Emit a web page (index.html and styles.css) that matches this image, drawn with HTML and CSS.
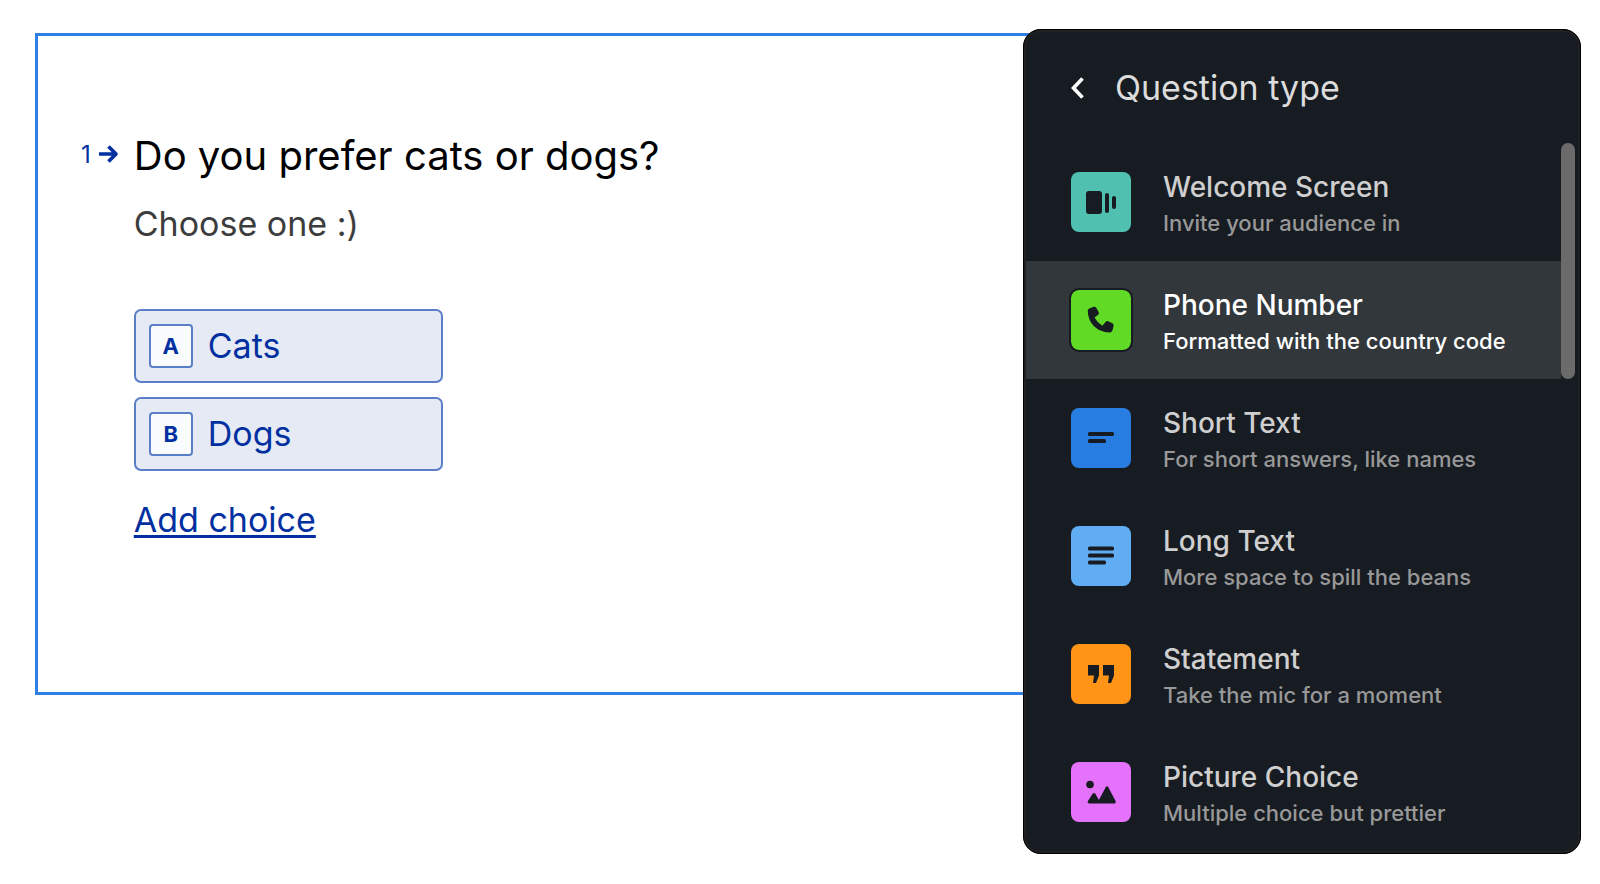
FILE: index.html
```
<!DOCTYPE html>
<html lang="en">
<head>
  <meta charset="UTF-8">
  <meta name="viewport" content="width=device-width,initial-scale=1.0">
  <title>Form Builder | Question type</title>
  <link rel="stylesheet" href="styles.css">
</head>
<body>

  <main class="builder">
    <section class="question-card">
      <div class="question-number">
        <span>1</span>
        <svg width="20" height="18" viewBox="0 0 20 18" fill="none" stroke="currentColor" stroke-width="3.6">
          <path d="M0 9h17M9.500 1.500L17 9l-7.500 7.500" stroke-linejoin="round"/>
        </svg>
      </div>
      <div class="question-body">
        <h1>Do you prefer cats or dogs?</h1>
        <p class="description">Choose one :)</p>

        <div class="choices">
          <button type="button" class="choice"><span class="key">A</span>Cats</button>
          <button type="button" class="choice"><span class="key">B</span>Dogs</button>
        </div>

        <a href="#" class="add-choice">Add choice</a>
      </div>
    </section>

    <aside class="type-panel">
      <header class="panel-header">
        <button type="button" class="back" aria-label="Back">
          <svg width="14" height="22" viewBox="0 0 14 22" fill="none" stroke="currentColor" stroke-width="3.6">
            <path d="M11.500 1.500L2.500 11l9 9.500"/>
          </svg>
        </button>
        <h2>Question type</h2>
      </header>

      <ul class="type-list">
        <li>
          <button type="button" class="type">
            <span class="icon welcome">
              <svg viewBox="0 0 60 60" fill="currentColor">
                <rect x="15" y="19" width="16" height="23" rx="3"/>
                <rect x="34" y="21" width="4" height="20" rx="2"/>
                <rect x="41" y="24" width="4" height="13" rx="2"/>
              </svg>
            </span>
            <span class="text">
              <span class="name">Welcome Screen</span>
              <span class="hint">Invite your audience in</span>
            </span>
          </button>
        </li>
        <li>
          <button type="button" class="type active">
            <span class="icon phone">
              <svg viewBox="0 0 60 60" fill="currentColor">
                <path d="M18.300 18.500l4.400-1.700q1.900-.4 2.700 1.200l2.400 4.200q.6 1.500-.6 2.500l-3.700 2.900q2.600 5 7.800 8.200l3.200-3.900q1.100-1.200 2.600-.6l4.300 2q1.500.9 1.200 2.600l-1.200 4.500q-.6 1.900-2.800 2C25.500 42.300 16.800 32.500 16.800 20.500q.1-1.400 1.500-2z"/>
              </svg>
            </span>
            <span class="text">
              <span class="name">Phone Number</span>
              <span class="hint">Formatted with the country code</span>
            </span>
          </button>
        </li>
        <li>
          <button type="button" class="type">
            <span class="icon short">
              <svg viewBox="0 0 60 60" fill="currentColor">
                <rect x="17" y="24" width="26" height="4" rx="1.500"/>
                <rect x="17" y="31" width="18" height="4" rx="1.500"/>
              </svg>
            </span>
            <span class="text">
              <span class="name">Short Text</span>
              <span class="hint">For short answers, like names</span>
            </span>
          </button>
        </li>
        <li>
          <button type="button" class="type">
            <span class="icon long">
              <svg viewBox="0 0 60 60" fill="currentColor">
                <rect x="17" y="20.500" width="26" height="4" rx="1.500"/>
                <rect x="17" y="27.500" width="26" height="4" rx="1.500"/>
                <rect x="17" y="34.500" width="18" height="4" rx="1.500"/>
              </svg>
            </span>
            <span class="text">
              <span class="name">Long Text</span>
              <span class="hint">More space to spill the beans</span>
            </span>
          </button>
        </li>
        <li>
          <button type="button" class="type">
            <span class="icon statement">
              <svg viewBox="0 0 60 60" fill="currentColor">
                <path d="M17 21h11v10.500l-3 7.500h-3l1-7.500h-6zM32 21h11v10.500l-3 7.500h-3l1-7.500h-6z"/>
              </svg>
            </span>
            <span class="text">
              <span class="name">Statement</span>
              <span class="hint">Take the mic for a moment</span>
            </span>
          </button>
        </li>
        <li>
          <button type="button" class="type">
            <span class="icon picture">
              <svg viewBox="0 0 60 60" fill="currentColor">
                <circle cx="19" cy="22.500" r="3.800"/>
                <path d="M18 41.500q-2-.3-1.200-2.200l5-7.800q1.200-1.200 2.400 0l3.700 6.500 6.900-13q1.200-1.600 2.400 0l7.500 14.300q.6 1.800-1.200 2.200z"/>
              </svg>
            </span>
            <span class="text">
              <span class="name">Picture Choice</span>
              <span class="hint">Multiple choice but prettier</span>
            </span>
          </button>
        </li>
      </ul>
      <div class="scroll-thumb"></div>
    </aside>
  </main>

</body>
</html>
```

FILE: styles.css
```
* {
  box-sizing: border-box;
}
body {
  margin: 0;
  background: #fff;
  font-family: Inter, "Liberation Sans", sans-serif;
}
h1, h2, p, ul {
  margin: 0;
  padding: 0;
  font-weight: 400;
}
button {
  font-family: inherit;
  cursor: pointer;
}
svg {
  display: block;
}
.builder {
  position: relative;
  min-height: 100vh;
  padding: 33px 26px 32px 35px;
}

/* Question preview */
.question-card {
  display: flex;
  gap: 15px;
  padding: 96px 43px 150px;
  border: 3px solid #2f80e4;
}
.question-number {
  display: flex;
  align-items: center;
  gap: 8px;
  height: 44px;
  color: #0230a0;
  font-size: 24px;
}
.question-body {
  flex: 1;
}
h1 {
  color: #000;
  font-size: 40px;
  line-height: 48px;
}
.description {
  margin-top: 22px;
  color: #3d3d3d;
  font-size: 34px;
  line-height: 44px;
}
.choices {
  display: flex;
  flex-direction: column;
  align-items: flex-start;
  gap: 14px;
  margin: 63px 0 27px;
}
.choice {
  display: flex;
  align-items: center;
  gap: 15px;
  width: 309px;
  padding: 13px;
  border: 2px solid #5a7fc8;
  border-radius: 7px;
  background: #e6eaf5;
  color: #0230a0;
  font-size: 34px;
  line-height: 44px;
}
.key {
  width: 44px;
  height: 44px;
  border: 2px solid #5a7fc8;
  border-radius: 4px;
  background: #fafbfd;
  font-size: 22px;
  font-weight: 700;
  line-height: 40px;
  text-align: center;
}
.add-choice {
  display: block;
  width: fit-content;
  color: #0230a0;
  font-size: 34px;
  line-height: 44px;
  text-decoration-thickness: 3px;
  text-underline-offset: 3px;
}

/* Question type menu, opens over the preview */
.type-panel {
  position: absolute;
  top: 29px;
  right: 19px;
  width: 35%;
  min-width: 480px;
  max-width: 558px;
  border: 3px solid #212121;
  border-radius: 18px;
  outline: 1px solid #000;
  outline-offset: -1px;
  background: #171b22;
}
.panel-header {
  display: flex;
  align-items: center;
  gap: 30px;
  height: 111px;
  padding: 0 45px;
  color: #dcdcdc;
}
.back {
  padding: 0;
  border: none;
  background: none;
  color: #fff;
}
h2 {
  font-size: 34px;
  line-height: 44px;
}
.type-list {
  padding-right: 17px;
  list-style: none;
}
.type {
  display: flex;
  align-items: center;
  gap: 32px;
  width: 100%;
  height: 118px;
  padding: 0 20px 0 45px;
  border: none;
  background: none;
  color: #cfcfcf;
  text-align: left;
}
.type.active {
  background: #32373b;
  color: #fff;
}
.icon {
  flex: none;
  width: 60px;
  height: 60px;
  border-radius: 8px;
  color: #171b22;
}
.active .icon {
  outline: 2px solid #171b22;
}
.welcome {
  background: #50c1b1;
}
.phone {
  background: #61da25;
}
.short {
  background: #287ee0;
}
.long {
  background: #60adf4;
}
.statement {
  background: #ff9417;
}
.picture {
  background: #e572fa;
}
.text {
  display: flex;
  flex-direction: column;
  gap: 2px;
  padding-top: 4px;
}
.name {
  font-size: 28px;
  font-weight: 500;
  line-height: 36px;
}
.hint {
  color: #989898;
  font-size: 22px;
  font-weight: 500;
  line-height: 32px;
}
.active .hint {
  color: #fff;
}
.scroll-thumb {
  position: absolute;
  top: 111px;
  right: 3px;
  width: 14px;
  height: 236px;
  border-radius: 7px;
  background: #6b6b6b;
}
```
